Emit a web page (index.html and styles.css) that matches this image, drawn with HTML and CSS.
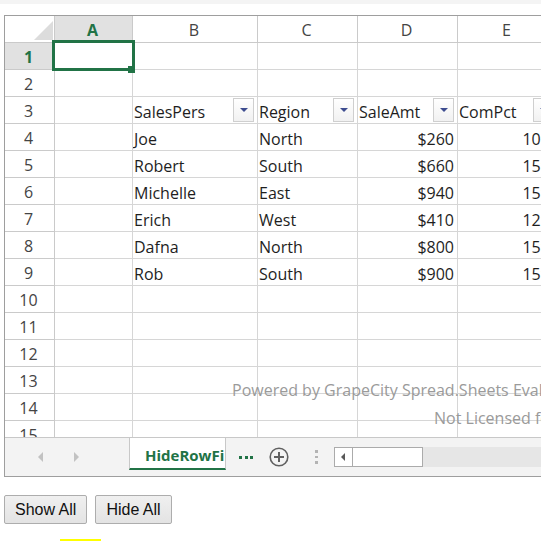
FILE: index.html
```html
<!DOCTYPE html>
<html>
<head>
<meta charset="utf-8">
<title>Spread Sheet</title>
<link rel="stylesheet" href="styles.css">
</head>
<body>
<div class="topstrip"></div>
<div class="sheet">
  <div class="grid">
    <div class="row hdr">
      <div class="c corner"><svg width="19" height="19" viewBox="0 0 19 19"><polygon points="19,0 19,19 0,19" fill="#dcdcdc"/></svg></div>
      <div class="c ch sel">A</div>
      <div class="c ch">B</div>
      <div class="c ch">C</div>
      <div class="c ch">D</div>
      <div class="c ch">E</div>
    </div>
    <div class="row"><div class="c rh sel">1</div><div class="c"></div><div class="c"></div><div class="c"></div><div class="c"></div><div class="c"></div></div>
    <div class="row"><div class="c rh">2</div><div class="c"></div><div class="c"></div><div class="c"></div><div class="c"></div><div class="c"></div></div>
    <div class="row"><div class="c rh">3</div><div class="c"></div>
      <div class="c flt"><span>SalesPers</span><span class="fbtn"></span></div>
      <div class="c flt"><span>Region</span><span class="fbtn"></span></div>
      <div class="c flt"><span>SaleAmt</span><span class="fbtn"></span></div>
      <div class="c flt"><span>ComPct</span><span class="fbtn"></span></div>
    </div>
    <div class="row"><div class="c rh">4</div><div class="c"></div><div class="c">Joe</div><div class="c">North</div><div class="c num">$260</div><div class="c num">10%</div></div>
    <div class="row"><div class="c rh">5</div><div class="c"></div><div class="c">Robert</div><div class="c">South</div><div class="c num">$660</div><div class="c num">15%</div></div>
    <div class="row"><div class="c rh">6</div><div class="c"></div><div class="c">Michelle</div><div class="c">East</div><div class="c num">$940</div><div class="c num">15%</div></div>
    <div class="row"><div class="c rh">7</div><div class="c"></div><div class="c">Erich</div><div class="c">West</div><div class="c num">$410</div><div class="c num">12%</div></div>
    <div class="row"><div class="c rh">8</div><div class="c"></div><div class="c">Dafna</div><div class="c">North</div><div class="c num">$800</div><div class="c num">15%</div></div>
    <div class="row"><div class="c rh">9</div><div class="c"></div><div class="c">Rob</div><div class="c">South</div><div class="c num">$900</div><div class="c num">15%</div></div>
    <div class="row"><div class="c rh">10</div><div class="c"></div><div class="c"></div><div class="c"></div><div class="c"></div><div class="c"></div></div>
    <div class="row"><div class="c rh">11</div><div class="c"></div><div class="c"></div><div class="c"></div><div class="c"></div><div class="c"></div></div>
    <div class="row"><div class="c rh">12</div><div class="c"></div><div class="c"></div><div class="c"></div><div class="c"></div><div class="c"></div></div>
    <div class="row"><div class="c rh">13</div><div class="c"></div><div class="c"></div><div class="c"></div><div class="c"></div><div class="c"></div></div>
    <div class="row"><div class="c rh">14</div><div class="c"></div><div class="c"></div><div class="c"></div><div class="c"></div><div class="c"></div></div>
    <div class="row"><div class="c rh">15</div><div class="c"></div><div class="c"></div><div class="c"></div><div class="c"></div><div class="c"></div></div>

    <div class="selection"></div>
    <div class="handle"></div>
    <div class="watermark">
      <div>Powered by GrapeCity Spread.Sheets Evaluation Version</div>
      <div class="wm2">Not Licensed for Distribution</div>
    </div>
  </div>
  <div class="tabbar">
    <div class="nav"><span class="arrow-l"></span><span class="arrow-r"></span></div>
    <div class="tab">HideRowFilter</div>
    <div class="rest">
      <div class="more"><span></span><span></span><span></span></div>
      <svg class="add" width="20" height="20" viewBox="0 0 20 20"><circle cx="10" cy="10" r="8.8" fill="none" stroke="#606060" stroke-width="1.6"/><path d="M10 5v10M5 10h10" stroke="#606060" stroke-width="2"/></svg>
      <div class="vdots"><span></span><span></span><span></span></div>
      <div class="hscroll"><div class="sb-btn"><span class="sb-arrow"></span></div><div class="thumb"></div></div>
    </div>
  </div>
</div>
<div class="actions">
  <button class="btn">Show All</button>
  <button class="btn">Hide All</button>
</div>
<div class="highlight"></div>
</body>
</html>
```
FILE: styles.css
```css
* { box-sizing: border-box; }
html, body { margin: 0; padding: 0; overflow: hidden; background: #fff; }
body { font-family: "Open Sans", "Noto Sans", sans-serif; width: 541px; height: 541px; }

.topstrip { height: 4px; background: #f4f4f4; }

.sheet {
  margin: 11px 0 0 4px;
  width: 620px;
  border: 1px solid #9e9e9e;
  overflow: hidden;
}

.grid { position: relative; height: 421px; overflow: hidden; }

.row { display: flex; height: 27px; }

.c {
  flex: none;
  display: flex;
  align-items: flex-end;
  padding: 0 3px 0 1px;
  border-right: 1px solid #d6d6d6;
  border-bottom: 1px solid #d6d6d6;
  font-size: 16px;
  line-height: 22px;
  color: #1e1e1e;
  white-space: nowrap;
  overflow: hidden;
}
.row > :nth-child(1) { width: 50px; }
.row > :nth-child(2) { width: 78px; }
.row > :nth-child(3) { width: 125px; }
.row > :nth-child(n+4) { width: 100px; }

.rh, .ch {
  justify-content: center;
  color: #444;
  padding-bottom: 1px;
  border-color: #cacaca;
}
.hdr > .c { border-color: #cacaca; }
.sel { background: #e1e1e1; color: #217346; font-weight: 700; }

.corner { justify-content: flex-end; align-items: flex-end; padding: 0 1px 2px 0; }

.num { justify-content: flex-end; }

.flt { justify-content: space-between; }
.fbtn {
  flex: none;
  width: 21px;
  height: 24px;
  align-self: center;
  border: 1px solid #cfcfcf;
  background: linear-gradient(#ffffff, #f1f1f1);
  display: flex;
  align-items: center;
  justify-content: center;
}
.fbtn::after {
  content: "";
  border-left: 4px solid transparent;
  border-right: 4px solid transparent;
  border-top: 4px solid #3d4c8f;
}

.selection {
  position: absolute;
  left: 47px;
  top: 24px;
  width: 83px;
  height: 31px;
  border: 3px solid #217346;
}
.handle {
  position: absolute;
  left: 123px;
  top: 50px;
  width: 7px;
  height: 7px;
  background: #217346;
}

.watermark {
  position: absolute;
  left: 227px;
  top: 360px;
  font-size: 16px;
  line-height: 28px;
  color: #9a9a9a;
  white-space: nowrap;
}
.wm2 { padding-left: 202px; }

.tabbar { display: flex; height: 39px; background: #f3f3f3; }
.nav {
  flex: none;
  width: 124px;
  border-top: 1px solid #c8c8c8;
  display: flex;
  align-items: center;
  padding-left: 33px;
  gap: 31px;
}
.arrow-l, .arrow-r { width: 0; height: 0; border-style: solid; }
.arrow-l { border-width: 5px 5px 5px 0; border-color: transparent #c2c2c2 transparent transparent; }
.arrow-r { border-width: 5px 0 5px 5px; border-color: transparent transparent transparent #c2c2c2; }

.tab {
  flex: none;
  width: 97px;
  height: 33px;
  background: #fff;
  border: 1px solid #c8c8c8;
  border-bottom: 2px solid #217346;
  padding: 6px 0 0 15px;
  font-size: 15px;
  line-height: 22px;
  font-weight: 700;
  color: #217346;
  white-space: nowrap;
  overflow: hidden;
}

.rest {
  flex: 1;
  border-top: 1px solid #c8c8c8;
  display: flex;
  align-items: center;
}
.more { display: flex; gap: 2.5px; margin-left: 13px; }
.more span { width: 3px; height: 3px; background: #217346; }
.add { flex: none; margin-left: 16px; }
.vdots { display: flex; flex-direction: column; gap: 3px; margin-left: 26px; }
.vdots span { width: 2.5px; height: 2.5px; background: #b3b3b3; }
.hscroll {
  flex: 1;
  margin-left: 16px;
  height: 20px;
  background: #e6e6e6;
  display: flex;
}
.sb-btn {
  flex: none;
  width: 19px;
  border: 1px solid #ababab;
  background: #fff;
  display: flex;
  align-items: center;
  justify-content: center;
}
.sb-arrow { width: 0; height: 0; border-style: solid; border-width: 4px 4px 4px 0; border-color: transparent #5a5a5a transparent transparent; }
.thumb {
  flex: none;
  width: 71px;
  margin-left: -1px;
  border: 1px solid #ababab;
  background: #fff;
}

.actions { display: flex; gap: 8px; margin: 18px 0 0 4px; }
.btn {
  height: 29px;
  padding: 0 10px;
  font-family: "Liberation Sans", Arial, sans-serif;
  font-size: 16px;
  color: #111;
  background: linear-gradient(#f0f0f0, #e3e3e3);
  border: 1px solid #adadad;
  border-radius: 2px;
}

.highlight { margin: 15px 0 0 60px; width: 41px; height: 8px; background: #ffff00; }
```
